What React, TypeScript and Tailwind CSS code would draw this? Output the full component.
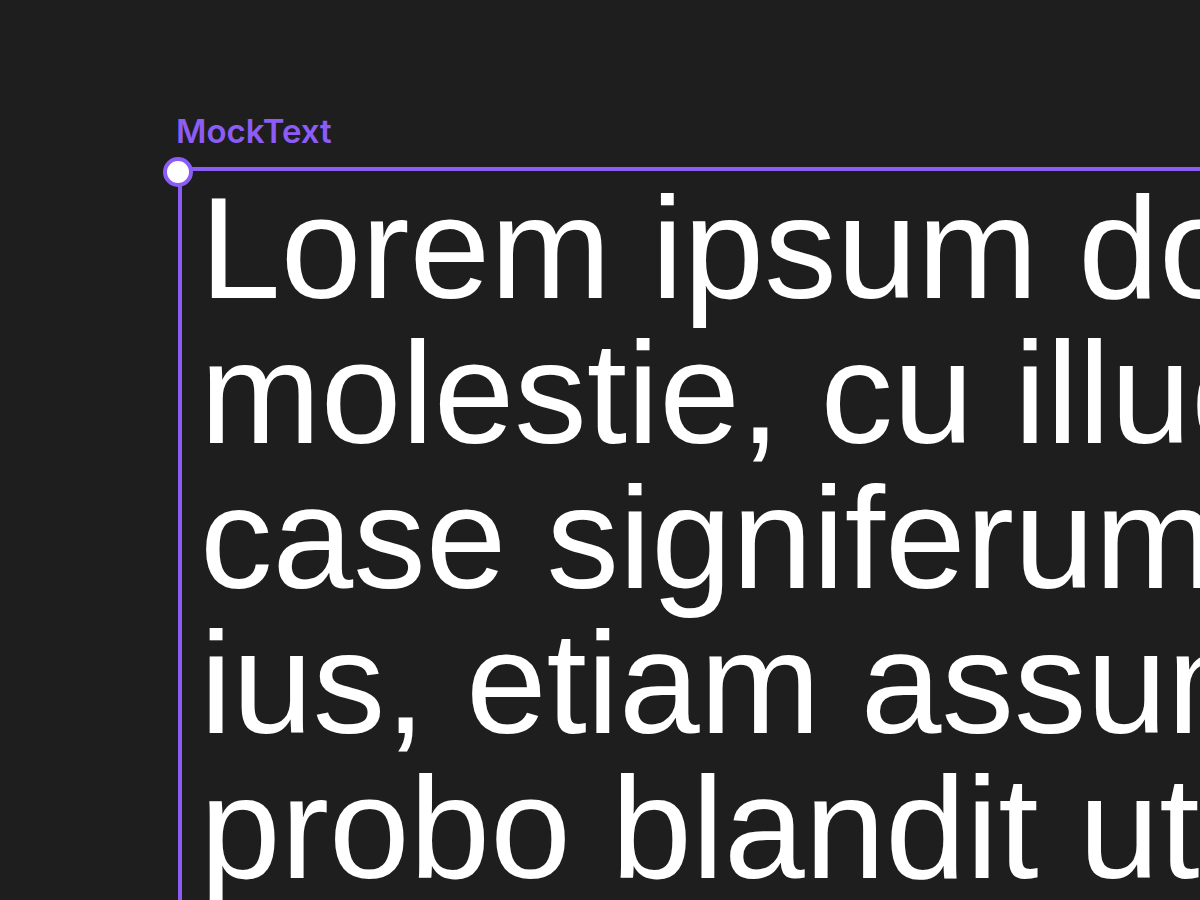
import React from 'react';

// Text layer selected on a dark canvas, with its name tag and corner handle

const lines = [
    'Lorem ipsum dolor sit amet, eos ei',
    'molestie, cu illud nostrum',
    'case signiferumque vis',
    'ius, etiam assum nusquam',
    'probo blandit ut mei',
];

export default function App() {
    return (
        <div className="h-[900px] w-full overflow-hidden bg-[#1e1e1e] pl-[176px] pt-[111px] font-['Liberation_Sans',Arial,sans-serif]">
            {/* Layer name */}
            <div className="h-[40px] font-['Inter',sans-serif] text-[33px] leading-[40px] font-semibold text-[#8b5cf6] whitespace-nowrap">
                MockText
            </div>

            {/* Selection frame */}
            <div className="relative mt-[16px] ml-[2px] border-t-4 border-l-4 border-[#8b5cf6] pl-[18px] pt-[5px]">
                <div className="absolute -left-[19px] -top-[14px] h-[30px] w-[30px] rounded-full border-4 border-[#8b5cf6] bg-white" />

                {lines.map((line) => (
                    <div key={line} className="whitespace-nowrap text-[145px] leading-[145px] text-white">
                        {line}
                    </div>
                ))}
            </div>
        </div>
    );
}
